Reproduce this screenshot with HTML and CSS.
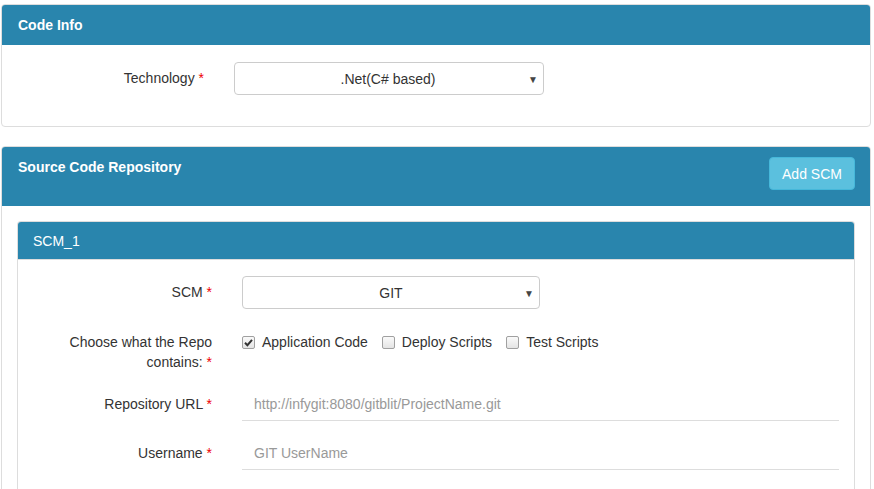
FILE: index.html
```html
<!DOCTYPE html>
<html>
<head>
<meta charset="utf-8">
<link rel="stylesheet" href="styles.css">
</head>
<body>
<div class="page">
  <section class="panel">
    <div class="panel-head">
      <h3 class="panel-title">Code Info</h3>
    </div>
    <div class="panel-body body-code">
      <div class="row">
        <label class="lbl">Technology <span class="req">*</span></label>
        <div class="field">
          <div class="select sel-tech"><span>.Net(C# based)</span><span class="caret">▼</span></div>
        </div>
      </div>
    </div>
  </section>

  <section class="panel panel-scm">
    <div class="panel-head head-scm">
      <h3 class="panel-title">Source Code Repository</h3>
      <button class="btn-add">Add SCM</button>
    </div>
    <div class="panel-body body-scm">
      <section class="panel inner">
        <div class="panel-head head-inner">SCM_1</div>
        <div class="panel-body body-inner">
          <div class="row row-select">
            <label class="lbl">SCM <span class="req">*</span></label>
            <div class="field">
              <div class="select sel-scm"><span>GIT</span><span class="caret">▼</span></div>
            </div>
          </div>
          <div class="row row-check">
            <label class="lbl">Choose what the Repo contains: <span class="req">*</span></label>
            <div class="field checks">
              <span class="chk checked"><svg viewBox="0 0 13 13" width="13" height="13"><path d="M3 6.8 L5.4 9.2 L10 3.8" fill="none" stroke="#333" stroke-width="2"/></svg></span><span class="chk-text">Application Code</span>
              <span class="chk"></span><span class="chk-text">Deploy Scripts</span>
              <span class="chk"></span><span class="chk-text">Test Scripts</span>
            </div>
          </div>
          <div class="row row-input">
            <label class="lbl">Repository URL <span class="req">*</span></label>
            <div class="field">
              <div class="line-input">http://infygit:8080/gitblit/ProjectName.git</div>
            </div>
          </div>
          <div class="row row-input">
            <label class="lbl">Username <span class="req">*</span></label>
            <div class="field">
              <div class="line-input">GIT UserName</div>
            </div>
          </div>
        </div>
      </section>
    </div>
  </section>
</div>
</body>
</html>
```
FILE: styles.css
```css
html, body {
  margin: 0;
  padding: 0;
  background: #fff;
}
body {
  font-family: "Liberation Sans", Arial, sans-serif;
  font-size: 14px;
  line-height: 20px;
  color: #333;
}
.page {
  padding: 4px 3px 0 1px;
}
.panel {
  border: 1px solid #ddd;
  border-radius: 4px;
  background: #fff;
  overflow: hidden;
}
.panel-head {
  background: #2985ad;
  color: #fff;
  height: 40px;
  padding: 0 16px;
  display: flex;
  align-items: center;
}
.panel-title {
  margin: 0;
  font-size: 14px;
  font-weight: bold;
}
.panel-body.body-code {
  padding: 17px 0 31px;
}
.row {
  display: flex;
}
.lbl {
  flex: 0 0 25%;
  box-sizing: border-box;
  padding-right: 15px;
  text-align: right;
}
.req {
  color: #e00;
}
.field {
  box-sizing: border-box;
  padding: 0 15px;
}
.body-code .lbl {
  padding-top: 6px;
}
.select {
  box-sizing: border-box;
  height: 33px;
  border: 1px solid #ccc;
  border-radius: 4px;
  display: flex;
  align-items: center;
  position: relative;
}
.select span:first-child {
  flex: 1;
  text-align: center;
}
.caret {
  position: absolute;
  right: 5px;
  top: 7px;
  font-size: 10px;
  color: #444;
}
.sel-tech {
  width: 310px;
}
.sel-tech span:first-child {
  padding-right: 2px;
}
.panel-scm {
  margin-top: 19px;
}
.head-scm {
  height: auto;
  padding: 10px 15px 16px 16px;
  align-items: flex-start;
  justify-content: space-between;
}
.head-scm .panel-title {
  line-height: 20px;
}
.btn-add {
  font-family: inherit;
  font-size: 14px;
  color: #fff;
  background: #5bc0de;
  border: 1px solid #46b8da;
  border-radius: 4px;
  height: 33px;
  width: 86px;
  padding: 0;
  cursor: pointer;
}
.body-scm {
  padding: 15px 15px 0;
}
.inner {
  border-bottom: none;
  border-radius: 4px 4px 0 0;
}
.head-inner {
  height: 37px;
  padding: 0 15px;
  font-size: 14px;
  border-bottom: 1px solid #ddd;
}
.body-inner {
  padding: 16px 0 10px;
}
.row-select {
  margin-bottom: 23px;
}
.row-select .lbl {
  padding-top: 6px;
}
.sel-scm {
  width: 298px;
}
.row-check {
  margin-bottom: 15px;
}
.row-check .lbl {
  padding-left: 30px;
}
.checks {
  display: flex;
  align-items: center;
  height: 20px;
}
.chk {
  box-sizing: border-box;
  width: 13px;
  height: 13px;
  border: 1px solid #a0a0a0;
  border-radius: 2px;
  background: linear-gradient(#fafafa, #e4e4e4);
  display: inline-block;
  margin-right: 7px;
  position: relative;
}
.chk svg {
  position: absolute;
  left: -1px;
  top: -1px;
}
.chk-text {
  margin-right: 14px;
}
.row-input {
  margin-bottom: 15px;
}
.row-input .lbl {
  padding-top: 7px;
}
.row-input .field {
  flex: 1;
}
.line-input {
  height: 34px;
  box-sizing: border-box;
  padding: 7px 12px 0;
  border-bottom: 1px solid #ddd;
  color: #999;
}
```
